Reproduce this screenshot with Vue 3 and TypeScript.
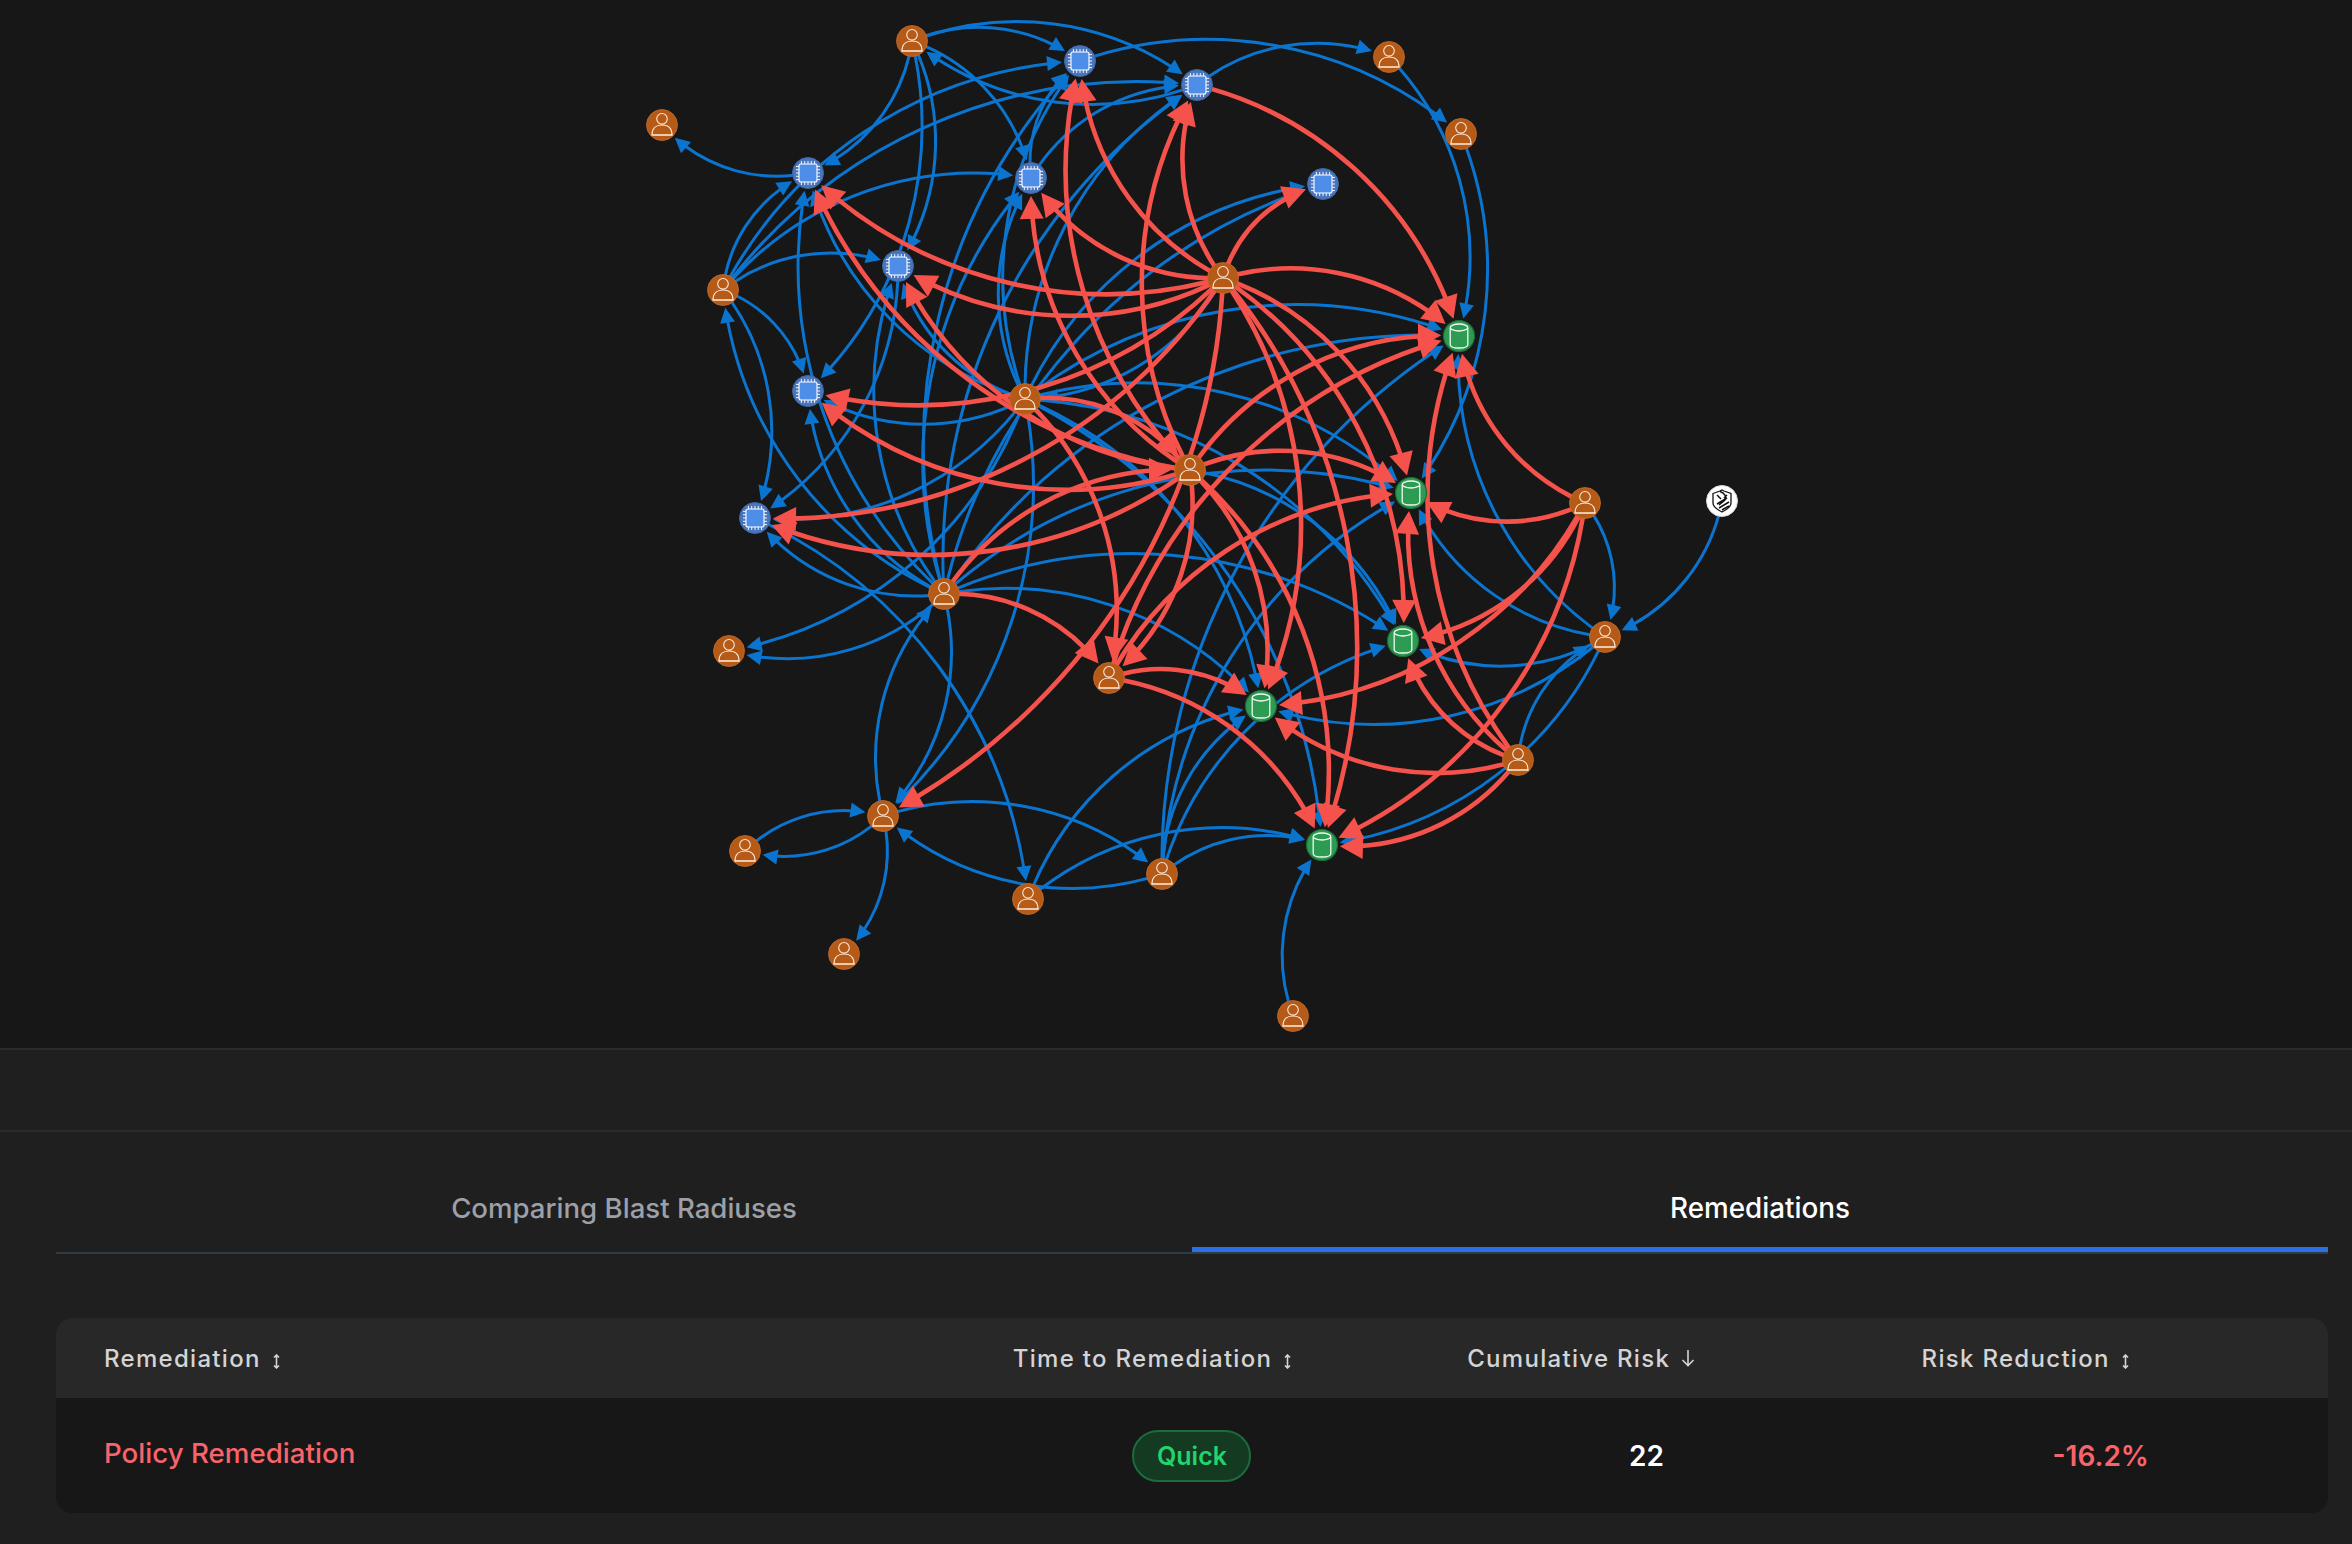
<script setup lang="ts">
type Kind = 'user' | 'cpu' | 'db' | 'idp'
interface GNode { x: number; y: number; kind: Kind }

const nodes: Record<string, GNode> = {
  A: { x: 912, y: 41, kind: 'user' }, B: { x: 662, y: 125, kind: 'user' },
  G: { x: 723, y: 290, kind: 'user' }, I: { x: 1389, y: 57, kind: 'user' },
  J: { x: 1461, y: 134, kind: 'user' }, L: { x: 1223, y: 278, kind: 'user' },
  P: { x: 1025, y: 399, kind: 'user' }, Q: { x: 944, y: 594, kind: 'user' },
  R: { x: 729, y: 651, kind: 'user' }, S: { x: 1109, y: 678, kind: 'user' },
  T: { x: 1190, y: 470, kind: 'user' }, V: { x: 1585, y: 503, kind: 'user' },
  X: { x: 1605, y: 637, kind: 'user' }, Y: { x: 883, y: 816, kind: 'user' },
  Z: { x: 745, y: 851, kind: 'user' }, AA: { x: 844, y: 954, kind: 'user' },
  AB: { x: 1028, y: 899, kind: 'user' }, AE: { x: 1162, y: 874, kind: 'user' },
  AF: { x: 1518, y: 760, kind: 'user' }, AG: { x: 1293, y: 1016, kind: 'user' },
  C: { x: 808, y: 173, kind: 'cpu' }, D: { x: 1080, y: 61, kind: 'cpu' },
  E: { x: 1031, y: 178, kind: 'cpu' }, F: { x: 898, y: 266, kind: 'cpu' },
  H: { x: 1197, y: 85, kind: 'cpu' }, K: { x: 1323, y: 184, kind: 'cpu' },
  N: { x: 808, y: 391, kind: 'cpu' }, O: { x: 755, y: 518, kind: 'cpu' },
  M: { x: 1459, y: 336, kind: 'db' }, U: { x: 1411, y: 493, kind: 'db' },
  W: { x: 1403, y: 641, kind: 'db' }, AC: { x: 1261, y: 706, kind: 'db' },
  AD: { x: 1322, y: 845, kind: 'db' }, IDP: { x: 1722, y: 501, kind: 'idp' },
}

const blueEdges =
  'A-D A-H A-E H-A A-C A-F A-N G-C G-D G-E G-F G-H G-N G-O Q-G Q-C Q-N Q-F Q-E Q-D Q-H Q-K Q-O Q-R Q-Y Q-U Q-M Q-W Q-AC ' +
  'P-C P-F P-D P-E P-H P-K P-N P-O P-R P-Y P-U P-M P-AC P-AD P-W T-W L-P C-B E-H E-D F-O O-AB H-I D-J I-M J-U ' +
  'X-M X-U V-X IDP-X X-AC X-W AF-X X-AD AE-M AE-U AE-W AE-AC AE-AD AE-Y Y-AE AB-AC AB-AD Y-Q Y-Z Z-Y Y-AA AG-AD'
const redEdges =
  'L-K L-H L-D L-E L-F L-C L-M L-U L-W L-Y L-N L-O L-AC L-AD T-H T-D T-E T-C T-F T-N T-O T-U T-M T-S T-AC T-AD ' +
  'P-T P-S Q-T Q-S S-M S-U S-AC S-AD H-M V-M V-U V-W V-AC V-AD AF-M AF-U AF-W AF-AC AF-AD'

/* every edge is an arc whose radius equals its chord */
function buildEdge(spec: string, arrowLen: number, halfWidth: number) {
  const [a, b] = spec.split('-')
  const s = nodes[a]
  const t = nodes[b]
  const dx = t.x - s.x
  const dy = t.y - s.y
  const len = Math.hypot(dx, dy)
  const r = len
  const nx = dy / len
  const ny = -dx / len
  const cx = (s.x + t.x) / 2 - nx * r * Math.cos(Math.PI / 6)
  const cy = (s.y + t.y) / 2 - ny * r * Math.cos(Math.PI / 6)
  const a0 = Math.atan2(s.y - cy, s.x - cx)
  const a1 = a0 + Math.PI / 3
  const start = a0 + 14 / r
  const tip = a1 - 18 / r
  const lineEnd = tip - (arrowLen * 0.8) / r
  const pt = (th: number) => [cx + r * Math.cos(th), cy + r * Math.sin(th)]
  const p0 = pt(start)
  const p1 = pt(lineEnd)
  const pTip = pt(tip)
  const tx = -Math.sin(tip)
  const ty = Math.cos(tip)
  const bx = pTip[0] - tx * arrowLen
  const by = pTip[1] - ty * arrowLen
  const points = [
    [pTip[0], pTip[1]],
    [bx - ty * halfWidth, by + tx * halfWidth],
    [bx + ty * halfWidth, by - tx * halfWidth],
  ]
    .map((p) => p.map((v) => v.toFixed(1)).join(','))
    .join(' ')
  const d = `M${p0[0].toFixed(1)} ${p0[1].toFixed(1)}A${r.toFixed(1)} ${r.toFixed(1)} 0 0 1 ${p1[0].toFixed(1)} ${p1[1].toFixed(1)}`
  return { id: spec, d, points }
}

const blue = blueEdges.split(' ').map((e) => buildEdge(e, 15, 7.5))
const red = redEdges.split(' ').map((e) => buildEdge(e, 23, 12))

const nodeList = Object.entries(nodes).map(([id, n]) => ({ id, ...n, tf: `translate(${n.x} ${n.y})` }))

const ticks = [-6.6, -3.3, 0, 3.3, 6.6]

const columns = [
  { label: 'Remediation', sort: 'both' },
  { label: 'Time to Remediation', sort: 'both' },
  { label: 'Cumulative Risk', sort: 'down' },
  { label: 'Risk Reduction', sort: 'both' },
]
</script>

<template>
  <div class="page">
    <section class="graph">
      <svg class="graph-svg" width="2352" height="1048" viewBox="0 0 2352 1048">
        <g v-for="e in blue" :key="'b' + e.id" class="edge-blue">
          <path :d="e.d" />
          <polygon :points="e.points" />
        </g>
        <g v-for="e in red" :key="'r' + e.id" class="edge-red">
          <path :d="e.d" />
          <polygon :points="e.points" />
        </g>
        <g v-for="n in nodeList" :key="n.id" :transform="n.tf">
          <template v-if="n.kind === 'user'">
            <circle r="15.5" class="user-bg" />
            <circle cy="-6.2" r="5.3" class="glyph" />
            <path d="M-10 10C-10 3-6 0 0 0C6 0 10 3 10 10Z" class="glyph" />
            <path d="M-10.5 10H10.5" class="glyph" />
          </template>
          <template v-else-if="n.kind === 'cpu'">
            <circle r="15.5" class="cpu-bg" />
            <path
              v-for="t in ticks"
              :key="'v' + t"
              :d="`M${t} -12V12`"
              class="tick"
            />
            <path
              v-for="t in ticks"
              :key="'h' + t"
              :d="`M-12 ${t}H12`"
              class="tick"
            />
            <rect x="-9" y="-9" width="18" height="18" rx="2" class="cpu-core" />
          </template>
          <template v-else-if="n.kind === 'db'">
            <circle r="15.5" class="db-bg" />
            <path d="M-8.8 -8V8.5C-8.8 10.8 -5 12 0 12C5 12 8.8 10.8 8.8 8.5V-8" class="glyph" />
            <ellipse cy="-8.5" rx="8.8" ry="3.5" class="glyph" />
          </template>
          <template v-else>
            <circle r="15.5" class="idp-bg" />
            <path d="M-9 -7.5L-2 -10L0 -11L2 -10L9 -7.5V2C9 6 4 9 0 11C-4 9 -9 6 -9 2Z" class="shield" />
            <path d="M-2 -9.5C2 -8 5 -5 3 -1L-3 4M-5 -6L-1 -2M2 -3L5 -6M-5 3L5 -3M-3 7L7 1M0 9L7 5" class="shield-ink" />
          </template>
        </g>
      </svg>
    </section>

    <div class="band"></div>

    <nav class="tabs">
      <div class="tab">Comparing Blast Radiuses</div>
      <div class="tab active">Remediations</div>
    </nav>

    <section class="table">
      <div class="head">
        <div v-for="c in columns" :key="c.label" class="th">
          <span>{{ c.label }}</span>
          <svg v-if="c.sort === 'both'" class="sort" width="9" height="15" viewBox="0 0 9 15">
            <path d="M4.5 1V14M2 3.5L4.5 1L7 3.5M2 11.5L4.5 14L7 11.5" />
          </svg>
          <svg v-else class="sort down" width="14" height="18" viewBox="0 0 14 18">
            <path d="M7 1V16.5M1.5 11L7 16.5L12.5 11" />
          </svg>
        </div>
      </div>
      <div class="row">
        <div class="name">Policy Remediation</div>
        <div class="cell"><span class="pill">Quick</span></div>
        <div class="cell risk">22</div>
        <div class="cell reduction">-16.2%</div>
      </div>
    </section>
  </div>
</template>

<style scoped>
.page {
  width: 100%;
  height: 1544px;
  background: #1f1f1f;
  font-family: Inter, "Liberation Sans", sans-serif;
  overflow: hidden;
}
.graph {
  height: 1048px;
  background: #171717;
  border-bottom: 2px solid #2b2b2b;
}
.graph-svg {
  display: block;
}
.edge-blue path {
  fill: none;
  stroke: #0b74cf;
  stroke-width: 3;
}
.edge-blue polygon {
  fill: #0b74cf;
}
.edge-red path {
  fill: none;
  stroke: #f5524c;
  stroke-width: 4.6;
}
.edge-red polygon {
  fill: #f5524c;
}
.user-bg {
  fill: #b65a18;
  stroke: #c46b2c;
  stroke-width: 0.8;
}
.glyph {
  fill: none;
  stroke: #fbe9d8;
  stroke-width: 1.1;
}
.cpu-bg {
  fill: #4a76bc;
  stroke: #3d65a5;
  stroke-width: 1;
}
.tick {
  stroke: #eaf2ff;
  stroke-width: 1;
}
.cpu-core {
  fill: #4e8de8;
  stroke: #ffffff;
  stroke-width: 1.1;
}
.db-bg {
  fill: #2e9b52;
  stroke: #1d6a38;
  stroke-width: 1.2;
}
.db-bg + .glyph,
.db-bg ~ .glyph {
  stroke: #eefaf0;
  stroke-width: 1.3;
}
.idp-bg {
  fill: #ffffff;
  stroke: #d9d9d9;
  stroke-width: 1;
}
.shield {
  fill: #ffffff;
  stroke: #111111;
  stroke-width: 1.3;
}
.shield-ink {
  fill: none;
  stroke: #111111;
  stroke-width: 1.5;
}
.band {
  height: 80px;
  border-bottom: 2px solid #2b2b2b;
}
.tabs {
  display: grid;
  grid-template-columns: 1fr 1fr;
  margin: 0 24px 0 56px;
  height: 120px;
  border-bottom: 2px solid #2e3a46;
}
.tab {
  display: flex;
  align-items: center;
  justify-content: center;
  padding-top: 32px;
  height: 120px;
  box-sizing: border-box;
  color: #9ca0a8;
  font-size: 27.6px;
  font-weight: 500;
}
.tab.active {
  color: #ffffff;
  border-bottom: 5px solid #2a6fe6;
  padding-top: 37px;
  font-size: 27.8px;
}
.table {
  margin: 64px 24px 0 56px;
  border-radius: 16px;
  overflow: hidden;
  background: #171717;
}
.head,
.row {
  display: grid;
  grid-template-columns: 2fr 1fr 1fr 1fr;
}
.head {
  height: 80px;
  background: #282828;
  align-items: center;
}
.th {
  display: flex;
  align-items: center;
  gap: 11px;
  padding-left: 48px;
  color: #d4d4d4;
  font-size: 24px;
  font-weight: 500;
  letter-spacing: 1.3px;
  white-space: nowrap;
}
.sort {
  margin-top: 6px;
  fill: none;
  stroke: #d4d4d4;
  stroke-width: 1.6;
}
.sort.down {
  margin-top: 0;
  margin-left: 0;
}
.row {
  height: 115px;
  align-items: center;
}
.name {
  padding-left: 48px;
  padding-bottom: 6px;
  color: #f8646a;
  font-size: 27.7px;
  font-weight: 500;
}
.cell {
  display: flex;
  justify-content: center;
  font-size: 28px;
  font-weight: 600;
}
.pill {
  display: flex;
  align-items: center;
  justify-content: center;
  width: 119px;
  height: 52px;
  box-sizing: border-box;
  border: 2px solid #1d6b3d;
  border-radius: 26px;
  background: #143a22;
  color: #22d46e;
  font-size: 25px;
  font-weight: 600;
}
.risk {
  color: #ffffff;
}
.reduction {
  color: #f8646a;
}
</style>

<style>
html,
body {
  margin: 0;
  background: #1f1f1f;
}
</style>
